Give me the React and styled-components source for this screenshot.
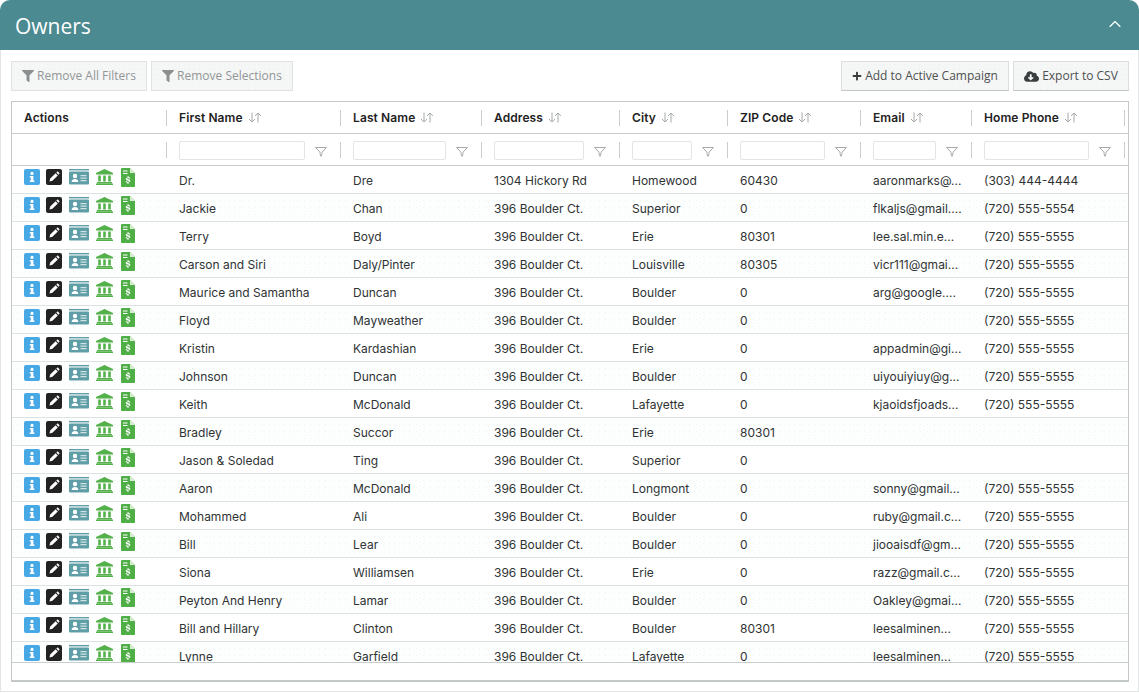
import React from "react";
import styled, { createGlobalStyle } from "styled-components";
import { FaFilter, FaPlus, FaCloudDownloadAlt } from "react-icons/fa";
import { FiChevronUp } from "react-icons/fi";

const GlobalStyle = createGlobalStyle`
  html, body {
    margin: 0;
    padding: 0;
    background: #fff;
    font-family: Inter, "Liberation Sans", sans-serif;
    overflow: hidden;
  }
  * { box-sizing: border-box; }
`;

const COLUMNS = "155px 174px 141px 138px 108px 133px 111px 153px 1fr";

const speckle = (dot, base) => `
  background-color: ${base};
  background-image:
    radial-gradient(${dot} 0.6px, transparent 0.8px),
    radial-gradient(${dot} 0.6px, transparent 0.8px);
  background-size: 5px 5px, 7px 7px;
  background-position: 0 0, 2px 3px;
`;

const Panel = styled.section`
  width: 1139px;
  height: 692px;
  display: flex;
  flex-direction: column;
  border: 1px solid #e2e5e5;
  border-top: 0;
  border-radius: 10px 10px 0 0;
`;

const PanelHeader = styled.header`
  height: 50px;
  margin: 0 -1px;
  flex: none;
  display: flex;
  align-items: center;
  justify-content: space-between;
  padding: 0 14px 0 15px;
  background: #4a8a90;
  border-radius: 10px 10px 0 0;
  color: #fff;
  svg { margin-top: -2px; }
`;

const Title = styled.h2`
  margin: 2px 0 0;
  font-family: "Open Sans", sans-serif;
  font-size: 21px;
  font-weight: 400;
`;

const Toolbar = styled.div`
  display: flex;
  justify-content: space-between;
  padding: 11px 9px 10px 10px;
  flex: none;
`;

const ButtonGroup = styled.div`
  display: flex;
  gap: 4px;
`;

const ToolButton = styled.button`
  height: 30px;
  width: ${(p) => p.$width}px;
  padding: 0 0 2px;
  display: flex;
  align-items: center;
  justify-content: center;
  gap: 3px;
  ${speckle("#eeefef", "#f5f6f6")}
  border: 1px solid ${(p) => (p.disabled ? "#e0e2e2" : "#dcdede")};
  border-bottom-color: ${(p) => (p.disabled ? "#e0e2e2" : "#c4c7c7")};
  font-family: "Open Sans", sans-serif;
  font-size: 12px;
  color: ${(p) => (p.disabled ? "#929696" : "#4d5152")};
  svg { color: ${(p) => (p.disabled ? "#8b8f90" : "#3a3d3e")}; margin-top: 2px; }
`;

const Table = styled.div`
  margin: 0 9px 9px 10px;
  flex: 1;
  min-height: 0;
  display: flex;
  flex-direction: column;
  border: 1px solid #c4c8c9;
  border-bottom-width: 2px;
`;

const HeadRow = styled.div`
  display: grid;
  grid-template-columns: ${COLUMNS};
  flex: none;
  height: 32px;
  border-bottom: 1px solid #c9cdce;
`;

const FilterRow = styled(HeadRow)`
  height: 32px;
`;

const HeadCell = styled.div`
  display: flex;
  align-items: center;
  padding-left: 12px;
  font-size: 12px;
  font-weight: 600;
  letter-spacing: 0.1px;
  color: #1f2223;
  position: relative;
  &::after {
    content: "";
    display: ${(p) => (p.$last ? "none" : "block")};
    position: absolute;
    right: 0;
    top: 8px;
    bottom: 7px;
    width: 1px;
    background: #c9cdce;
  }
`;

const SortArrows = styled.svg`
  margin-left: 5px;
  color: #a5a9aa;
`;

const FilterInput = styled.input`
  width: calc(100% - 36px);
  height: 19px;
  border: 1px solid #e2e4e5;
  border-radius: 2px;
  background: #fff;
  padding: 0;
`;

const FunnelIcon = styled.svg`
  margin: 3px 0 0 10px;
  flex: none;
  color: #a5a9aa;
`;

const FilterCell = styled(HeadCell)`
  padding-top: 1px;
`;

const Rows = styled.div`
  flex: 1;
  min-height: 0;
  overflow: hidden;
  max-height: 497px;
  border-bottom: 1px solid #c9cdce;
`;

const Row = styled.div`
  display: grid;
  grid-template-columns: ${COLUMNS};
  height: 28px;
  border-bottom: 1px solid #dfe2e3;
  ${(p) => (p.$alt ? speckle("#f0f4f4", "#fdfefe") : "background: #fff;")}
`;

const Cell = styled.div`
  padding: 1px 0 1px 12px;
  display: flex;
  align-items: center;
  font-size: 12px;
  color: #2f3334;
  white-space: nowrap;
  overflow: hidden;
  span { position: relative; top: 1px; }
`;

const Actions = styled.div`
  display: flex;
  align-items: flex-start;
  padding: 3px 0 0 12px;
`;

const ActionIcon = styled.svg`
  flex: none;
  margin-right: ${(p) => p.$gap}px;
  margin-top: ${(p) => p.$top || 0}px;
`;

const InfoIcon = () => (
  <ActionIcon width="16" height="16" viewBox="0 0 16 16" $gap={6}>
    <rect width="16" height="16" rx="2" fill="#46a8e4" />
    <circle cx="8" cy="4.4" r="1.6" fill="#fff" />
    <path d="M5.8 7h3.6v4.6h1V13H5.8v-1.4h1V8.4h-1z" fill="#fff" />
  </ActionIcon>
);

const EditIcon = () => (
  <ActionIcon width="16" height="16" viewBox="0 0 16 16" $gap={7}>
    <rect width="16" height="16" rx="2" fill="#222" />
    <path d="M3.5 12.5l.7-2.9 5.4-5.4 2.2 2.2-5.4 5.4zM10.3 3.5l.8-.8c.3-.3.7-.3 1 0l1.2 1.2c.3.3.3.7 0 1l-.8.8z" fill="#fff" />
  </ActionIcon>
);

const CardIcon = () => (
  <ActionIcon width="20" height="16" viewBox="0 0 20 16" $gap={7}>
    <rect y="0" width="20" height="1.4" fill="#5f9ea6" />
    <rect y="2.4" width="20" height="13.2" rx="1" fill="#5f9ea6" />
    <circle cx="6" cy="7" r="2.2" fill="#fff" />
    <path d="M2.6 13c0-2 1.5-3 3.4-3s3.4 1 3.4 3z" fill="#fff" />
    <path d="M11.5 6h6v1.2h-6zM11.5 8.5h6v1.2h-6zM11.5 11h6v1.2h-6z" fill="#cfe2e4" />
  </ActionIcon>
);

const BankIcon = () => (
  <ActionIcon width="17" height="16" viewBox="0 0 17 16" $gap={8}>
    <path d="M8.5 0L17 4v1.4H0V4z" fill="#54b04a" />
    <path d="M2.2 6.4h2.6v6H2.2zM7.2 6.4h2.6v6H7.2zM12.2 6.4h2.6v6h-2.6z" fill="#54b04a" />
    <path d="M1 13h15v1.2H1zM0 14.6h17V16H0z" fill="#54b04a" />
  </ActionIcon>
);

const DocIcon = () => (
  <ActionIcon width="14" height="19" viewBox="0 0 14 19" $gap={0} $top={-1}>
    <path d="M0 1a1 1 0 0 1 1-1h8l5 5v13a1 1 0 0 1-1 1H1a1 1 0 0 1-1-1z" fill="#4fae45" />
    <path d="M9 0l5 5H9z" fill="#d8eed5" />
    <path d="M2 2.5h4.5v1H2zM2 5h4.5v1H2z" fill="#fff" />
    <path d="M7.5 8v1.1c1 .1 1.8.6 1.8 1.3H8.1c0-.3-.4-.5-1-.5s-1 .2-1 .5c0 .8 3.3.3 3.3 2.3 0 .8-.8 1.4-1.9 1.5V16h-1v-1.3c-1.1-.1-1.9-.7-1.9-1.5h1.2c0 .4.5.6 1.2.6s1.1-.2 1.1-.6c0-.9-3.3-.4-3.3-2.3 0-.7.8-1.3 1.8-1.4V8z" fill="#fff" />
  </ActionIcon>
);

const SortIcon = () => (
  <SortArrows width="14" height="11" viewBox="0 0 14 11" fill="none" stroke="currentColor" strokeWidth="1">
    <path d="M4 0.5v9.5M1 7l3 3 3-3M10 10.5V1M7 4l3-3 3 3" />
  </SortArrows>
);

const Funnel = () => (
  <FunnelIcon width="12" height="10" viewBox="0 0 12 10" fill="none" stroke="currentColor" strokeWidth="1">
    <path d="M0.6 0.5h10.8L7 5.2v1.6L6 9.4 5 6.8V5.2z" />
  </FunnelIcon>
);

const headers = ["First Name", "Last Name", "Address", "City", "ZIP Code", "Email", "Home Phone"];

const owners = [
  ["Dr.", "Dre", "1304 Hickory Rd", "Homewood", "60430", "aaronmarks@...", "(303) 444-4444"],
  ["Jackie", "Chan", "396 Boulder Ct.", "Superior", "0", "flkaljs@gmail....", "(720) 555-5554"],
  ["Terry", "Boyd", "396 Boulder Ct.", "Erie", "80301", "lee.sal.min.e...", "(720) 555-5555"],
  ["Carson and Siri", "Daly/Pinter", "396 Boulder Ct.", "Louisville", "80305", "vicr111@gmai...", "(720) 555-5555"],
  ["Maurice and Samantha", "Duncan", "396 Boulder Ct.", "Boulder", "0", "arg@google....", "(720) 555-5555"],
  ["Floyd", "Mayweather", "396 Boulder Ct.", "Boulder", "0", "", "(720) 555-5555"],
  ["Kristin", "Kardashian", "396 Boulder Ct.", "Erie", "0", "appadmin@gi...", "(720) 555-5555"],
  ["Johnson", "Duncan", "396 Boulder Ct.", "Boulder", "0", "uiyouiyiuy@g...", "(720) 555-5555"],
  ["Keith", "McDonald", "396 Boulder Ct.", "Lafayette", "0", "kjaoidsfjoads...", "(720) 555-5555"],
  ["Bradley", "Succor", "396 Boulder Ct.", "Erie", "80301", "", ""],
  ["Jason & Soledad", "Ting", "396 Boulder Ct.", "Superior", "0", "", ""],
  ["Aaron", "McDonald", "396 Boulder Ct.", "Longmont", "0", "sonny@gmail...", "(720) 555-5555"],
  ["Mohammed", "Ali", "396 Boulder Ct.", "Boulder", "0", "ruby@gmail.c...", "(720) 555-5555"],
  ["Bill", "Lear", "396 Boulder Ct.", "Boulder", "0", "jiooaisdf@gm...", "(720) 555-5555"],
  ["Siona", "Williamsen", "396 Boulder Ct.", "Erie", "0", "razz@gmail.c...", "(720) 555-5555"],
  ["Peyton And Henry", "Lamar", "396 Boulder Ct.", "Boulder", "0", "Oakley@gmai...", "(720) 555-5555"],
  ["Bill and Hillary", "Clinton", "396 Boulder Ct.", "Boulder", "80301", "leesalminen...", "(720) 555-5555"],
  ["Lynne", "Garfield", "396 Boulder Ct.", "Lafayette", "0", "leesalminen...", "(720) 555-5555"],
];

export default function App() {
  return (
    <>
      <GlobalStyle />
      <Panel>
        <PanelHeader>
          <Title>Owners</Title>
          <FiChevronUp size={20} strokeWidth={1.4} />
        </PanelHeader>
        <Toolbar>
          <ButtonGroup>
            <ToolButton disabled $width={136}><FaFilter size={12} />Remove All Filters</ToolButton>
            <ToolButton disabled $width={142}><FaFilter size={12} />Remove Selections</ToolButton>
          </ButtonGroup>
          <ButtonGroup>
            <ToolButton $width={168}><FaPlus size={10} />Add to Active Campaign</ToolButton>
            <ToolButton $width={116}><FaCloudDownloadAlt size={15} />Export to CSV</ToolButton>
          </ButtonGroup>
        </Toolbar>
        <Table>
          <HeadRow>
            <HeadCell>Actions</HeadCell>
            {headers.map((h) => (
              <HeadCell key={h}>{h}<SortIcon /></HeadCell>
            ))}
            <HeadCell $last />
          </HeadRow>
          <FilterRow>
            <FilterCell />
            {headers.map((h) => (
              <FilterCell key={h}><FilterInput aria-label={h} /><Funnel /></FilterCell>
            ))}
            <FilterCell $last />
          </FilterRow>
          <Rows>
            {owners.map((owner, i) => (
              <Row key={i} $alt={i % 2 === 1}>
                <Actions>
                  <InfoIcon />
                  <EditIcon />
                  <CardIcon />
                  <BankIcon />
                  <DocIcon />
                </Actions>
                {owner.map((value, j) => (
                  <Cell key={j}><span>{value}</span></Cell>
                ))}
              </Row>
            ))}
          </Rows>
        </Table>
      </Panel>
    </>
  );
}
